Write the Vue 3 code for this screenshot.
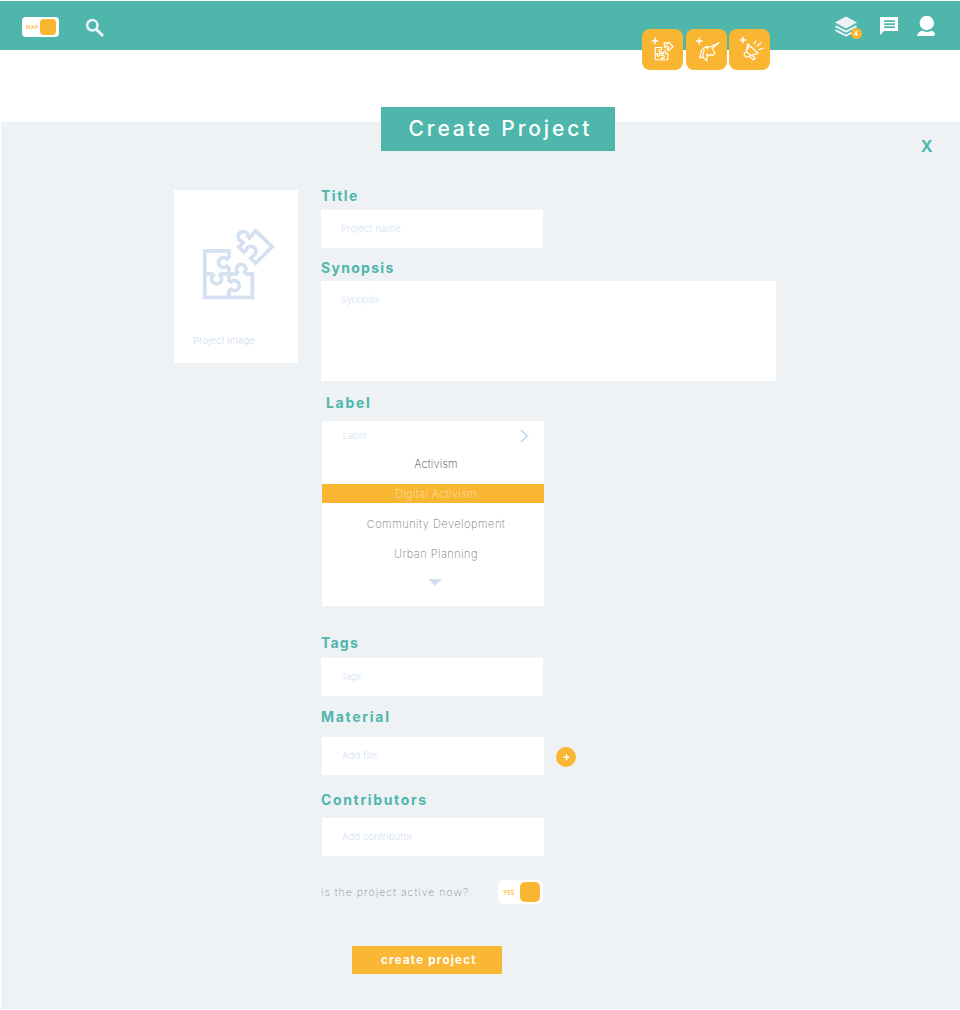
<script setup>
import { ref } from 'vue'

const options = [
  { name: 'Activism', cls: 'activism' },
  { name: 'Digital Activism', cls: 'digital' },
  { name: 'Community Development', cls: 'community' },
  { name: 'Urban Planning', cls: 'urban' }
]
const selected = ref('Digital Activism')
</script>

<template>
  <div class="page">
    <svg class="defs" width="0" height="0" aria-hidden="true">
      <symbol id="puzzle" viewBox="200 226 76 76">
        <g fill="none" stroke="currentColor">
          <path d="M204.8 250.8H229V257.2L227 259A5 5 0 1 0 227 266L229 267.8V273.6" />
          <path d="M204.8 249.2V297.3H252.4V273.8H246.2L244.8 272.2A4.8 4.8 0 1 0 237.4 272.2L236.3 273.8H220.8L219.8 275.2A5 5 0 1 1 213.4 275.2L212.3 273.8H204.8" />
          <path d="M229 273.8V280.4L231 281.8A5 5 0 1 1 231 289.4L229 290.8V297.3" />
          <path d="M255.7 230.8L272.2 246.8L255.7 263.2L250.7 258.4L252.5 256.1A5 5 0 1 0 246 250.2L244.2 252.2L238.8 247L243.2 242.8L241.8 241.4A5 5 0 1 1 248.2 236.6L249.4 238Z" />
        </g>
      </symbol>
    </svg>

    <header class="topbar">
      <div class="map-toggle"><span>MAP</span><i></i></div>
      <svg class="search" viewBox="0 0 20 20"><circle cx="7.3" cy="7.3" r="5.2" /><path d="M11.2 11.2L18 18" /></svg>
      <nav class="tools">
        <div class="layers">
          <svg viewBox="0 0 24 22">
            <path d="M11.5 0L23 6.2 11.5 12.5 0 6.2Z" fill="#eef2f5" />
            <path d="M.5 10.1L11.5 15.9 22.5 10.1M.5 14.2L11.5 20 22.5 14.2" fill="none" stroke="#eef2f5" stroke-width="2" />
          </svg>
          <b>4</b>
        </div>
        <svg class="chat" viewBox="0 0 18 18"><path fill="#fff" fill-rule="evenodd" d="M0 0H18V14H4L0 18ZM4 3.2V4.9H15V3.2ZM4 6.2V7.9H15V6.2ZM4 9.2V10.9H15V9.2Z" /></svg>
        <svg class="user" viewBox="0 0 18 20" fill="#fff"><circle cx="9.8" cy="7" r="7.2" /><path d="M0 20C.7 16.5 3 15.3 5.2 14.6Q9.5 17.2 14.1 14.7C16.5 15.3 18 16.4 18 18Q18 20 15.8 20Z" /></svg>
      </nav>
      <div class="quick">
        <div class="tile">
          <svg viewBox="0 0 41 41">
            <path class="plus" d="M13 8.8V15.2M9.8 12H16.2" />
            <use href="#puzzle" x="12" y="12" width="20" height="20" class="mini" />
          </svg>
        </div>
        <div class="tile">
          <svg viewBox="0 0 41 41">
            <path class="plus" d="M13.3 8.8V15.2M10.1 12H16.5" />
            <path class="line" d="M33 13.7L24 18L20.5 17.6Q15.2 19.5 14.6 25L14 28.8L16.8 28.2L20.7 31.6L21.2 27.2L23.8 25.6L26.6 26.4L28.8 24L26.2 19.2ZM20.5 17.6L21.6 20.2M18.4 21.2Q16.4 24 16.8 28.2M21.2 27.2L20.4 24.6" />
          </svg>
        </div>
        <div class="tile">
          <svg viewBox="0 0 41 41">
            <path class="plus" d="M14 7.8V14.2M10.8 11H17.2" />
            <path class="line" d="M18.7 14.8L29.2 24.5L21.8 26.3L17.3 22.6ZM17.3 22.6L15.5 24.2Q14.6 26.2 16.2 27.2Q18.5 28.8 20 27.2L21.8 26.3M23 26.4L26.2 29.3L24.5 31L20.8 27.8M19.8 17.7L18.3 20.4M25.2 14.8L26.8 11.8M28.3 17L31.8 14M30 20.6L34.3 19.2" />
          </svg>
        </div>
      </div>
    </header>

    <main class="panel">
      <h1>Create Project</h1>
      <button class="close">X</button>

      <div class="content">
        <div class="image-card">
          <svg class="puzzle"><use href="#puzzle" /></svg>
          <span>Project image</span>
        </div>

        <form class="form" @submit.prevent>
          <h2 class="title">Title</h2>
          <div class="field pname">Project name</div>

          <h2 class="synopsis">Synopsis</h2>
          <div class="field area">Synopsis</div>

          <h2 class="label">Label</h2>
          <div class="dropdown">
            <div class="dd-head">
              <span>Label</span>
              <svg viewBox="0 0 9 14"><path d="M1.2 1.2L7.2 7 1.2 12.8" /></svg>
            </div>
            <div
              v-for="o in options"
              :key="o.name"
              class="option"
              :class="[o.cls, { selected: selected === o.name }]"
              @click="selected = o.name"
            ><span>{{ o.name }}</span></div>
            <div class="arrow"></div>
          </div>

          <h2 class="tags">Tags</h2>
          <div class="field ptags">Tags</div>

          <h2 class="material">Material</h2>
          <div class="row">
            <div class="field shifted pfile">Add file</div>
            <button class="add"><svg viewBox="0 0 20 20"><path d="M10.6 7.2V13.2M7.6 10.2H13.6" /></svg></button>
          </div>

          <h2 class="contributors">Contributors</h2>
          <div class="field shifted pcontrib">Add contributor</div>

          <div class="active-row">
            <span class="question">is the project active now?</span>
            <div class="yes-toggle"><span>YES</span><i></i></div>
          </div>

          <button class="submit">create project</button>
        </form>
      </div>
    </main>
  </div>
</template>

<style>
body { background: #fff; }
</style>

<style scoped>
* { box-sizing: border-box; }
.page {
  width: 960px;
  height: 1010px;
  padding-top: 1px;
  overflow: hidden;
  font-family: Inter, "Liberation Sans", sans-serif;
  background: #fff;
}
.defs { position: absolute; }
button { border: 0; padding: 0; font-family: inherit; }
i { display: block; background: #f9b633; }

.topbar {
  position: relative;
  display: flex;
  height: 49px;
  padding-left: 22px;
  background: #4fb6ac;
}
.map-toggle {
  display: flex;
  align-items: center;
  justify-content: space-between;
  width: 37px;
  height: 20px;
  margin-top: 16px;
  padding: 0 3px 0 4px;
  border-radius: 4px;
  background: #fff;
}
.map-toggle span { font-size: 5px; font-weight: 500; letter-spacing: .4px; color: #f9b633; }
.map-toggle i { width: 16px; height: 16px; border-radius: 4px; }
.search { width: 20px; height: 20px; margin: 17px 0 0 25.5px; fill: none; stroke: #eef5f7; stroke-width: 2.5; }
.search path { stroke-width: 3; }
.tools { display: flex; margin-left: auto; padding-right: 24px; }
.layers { position: relative; width: 23px; height: 22px; margin-top: 15px; }
.layers svg { display: block; width: 23px; height: 22px; }
.layers b {
  position: absolute;
  left: 15.5px;
  top: 11.5px;
  width: 11px;
  height: 11px;
  border-radius: 50%;
  background: #f9b633;
  color: #fff;
  font-size: 6px;
  line-height: 11px;
  text-align: center;
}
.chat { width: 18px; height: 18px; margin: 16px 0 0 22px; }
.user { width: 18px; height: 20px; margin: 15px 1px 0 19px; }
.quick { position: absolute; left: 642px; top: 28px; display: flex; gap: 2.5px; }
.tile { width: 41px; height: 41px; border-radius: 8px; background: #f9b633; color: #fff; }
.tile svg { display: block; width: 41px; height: 41px; }
.plus { fill: none; stroke: #fff; stroke-width: 1.5; }
.line { fill: none; stroke: #fff; stroke-width: 1.2; stroke-linejoin: round; stroke-linecap: round; }
.mini { stroke-width: 4.4px; }

.panel {
  position: relative;
  height: 887px;
  margin: 72px 0 0 1px;
  padding-top: 64px;
  background: #eef2f5;
}
h1 {
  position: absolute;
  left: 379.5px;
  top: -15.5px;
  width: 234.5px;
  height: 44.5px;
  margin: 0;
  padding-left: 28px;
  background: #4fb6ac;
  color: #fff;
  font-size: 21px;
  font-weight: 450;
  line-height: 44px;
  letter-spacing: 2.9px;
  white-space: nowrap;
}
.close {
  position: absolute;
  right: 27.5px;
  top: 14px;
  height: 20px;
  background: none;
  color: #4fb6ac;
  font-size: 16px;
  font-weight: 700;
  line-height: 20px;
}
.content { display: flex; align-items: flex-start; padding-left: 173px; }
.image-card {
  width: 124px;
  height: 173px;
  margin: 4px 23px 0 0;
  padding: 36px 0 0 19px;
  background: #fff;
  color: #d5e0f1;
}
.puzzle { display: block; width: 76px; height: 76px; margin-left: 7px; stroke-width: 3.7px; }
.image-card span { display: block; margin-top: 32px; font-size: 9.5px; font-weight: 300; line-height: 14px; letter-spacing: .12px; color: #cfdbf0; }

.form { width: 455px; }
h2 { height: 20px; margin: 0; font-size: 14px; font-weight: 700; line-height: 20px; color: #4fb6ac; white-space: nowrap; }
.title { letter-spacing: 1.5px; margin-bottom: 4px; }
.synopsis { letter-spacing: 1.3px; margin: 10px 0 3px; }
.label { letter-spacing: 1.7px; margin: 12px 0 8px; padding-left: 5px; }
.tags { letter-spacing: 1.2px; margin: 27px 0 5px; }
.material { letter-spacing: 1.7px; margin: 11px 0 10px; }
.contributors { letter-spacing: 1.65px; margin: 15px 0 8px; }
.field {
  width: 222px;
  height: 38px;
  padding-left: 20px;
  background: #fff;
  color: #d5dff2;
  font-size: 9.5px;
  font-weight: 300;
  line-height: 37px;
}
.area { width: 455px; height: 100px; }
.shifted { margin-left: 1px; }
.pname { letter-spacing: .15px; }
.area { letter-spacing: -.25px; }
.ptags { letter-spacing: -.35px; }
.pfile { letter-spacing: .18px; }
.pcontrib { letter-spacing: .12px; }

.dropdown { width: 222px; height: 185px; margin-left: 1px; background: #fff; }
.dd-head {
  display: flex;
  align-items: center;
  justify-content: space-between;
  height: 30px;
  margin-bottom: 3px;
  padding: 0 15px 0 20.7px;
  color: #d5dff2;
  font-size: 9.5px;
  font-weight: 300;
  letter-spacing: -.08px;
}
.dd-head span { padding-bottom: 2px; }
.dd-head svg { width: 9px; height: 14px; fill: none; stroke: #cfdbf0; stroke-width: 2; }
.option {
  height: 19px;
  margin-bottom: 11px;
  padding-left: 6px;
  color: #444;
  font-size: 11px;
  font-weight: 200;
  line-height: 20px;
  text-align: center;
  white-space: nowrap;
}
.activism { letter-spacing: .15px; }
.digital { letter-spacing: .38px; }
.community { letter-spacing: .5px; color: #777; }
.urban { letter-spacing: .47px; color: #777; }
.selected { background: #f9b633; color: #fde3b0; }
.arrow { width: 0; height: 0; margin: 16px 0 0 105.5px; border: 7px solid transparent; border-top: 7px solid #d5dff1; border-bottom: 0; }

.row { display: flex; }
.add { width: 20px; height: 20px; margin: 10px 0 0 12px; border-radius: 50%; background: #f9b633; }
.add svg { display: block; width: 20px; height: 20px; stroke: #fff; stroke-width: 1.5; }

.active-row { display: flex; height: 24px; margin-top: 24px; }
.question { width: 177px; font-size: 10.5px; font-weight: 200; line-height: 25px; letter-spacing: 1.04px; color: #8c959c; white-space: nowrap; }
.yes-toggle {
  display: flex;
  align-items: center;
  justify-content: space-between;
  width: 45px;
  height: 24px;
  padding: 0 3px 0 5px;
  border-radius: 5px;
  background: #fff;
}
.yes-toggle span { font-size: 6px; font-weight: 500; color: #f9b633; }
.yes-toggle i { width: 20px; height: 20px; border-radius: 5px; }

.submit {
  display: block;
  width: 150px;
  height: 28px;
  margin: 42px 0 0 31px;
  padding-left: 29px;
  background: #fab735;
  color: #fff;
  font-size: 11.5px;
  font-weight: 700;
  line-height: 25px;
  letter-spacing: 1.25px;
  text-align: left;
  white-space: nowrap;
}
</style>
